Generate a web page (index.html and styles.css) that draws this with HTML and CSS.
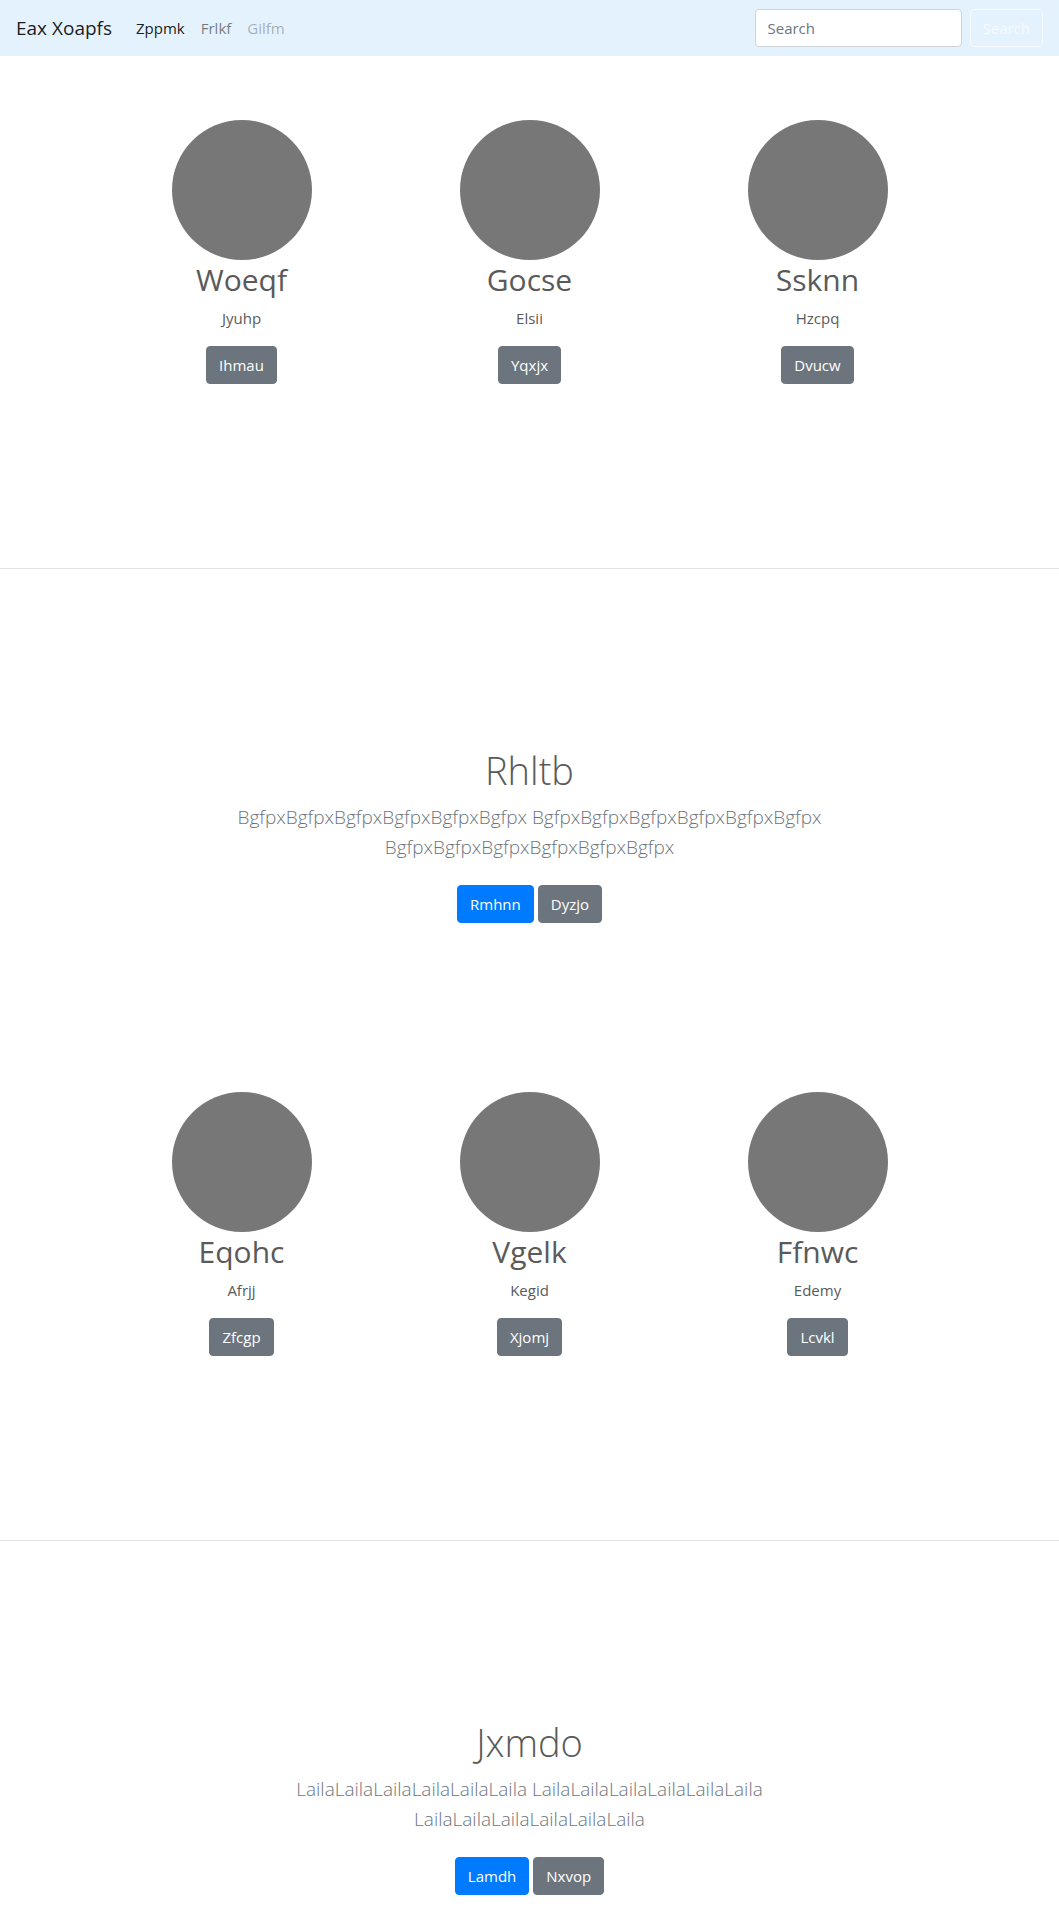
FILE: index.html
```html
<!DOCTYPE html>
<html lang="en">
<head>
<meta charset="utf-8">
<meta name="viewport" content="width=device-width, initial-scale=1">
<title>Eax Xoapfs</title>
<link rel="stylesheet" href="styles.css">
</head>
<body>
<nav class="navbar">
  <a class="brand" href="#">Eax Xoapfs</a>
  <ul class="nav-list">
    <li><a class="nav-link active" href="#">Zppmk</a></li>
    <li><a class="nav-link" href="#">Frlkf</a></li>
    <li><a class="nav-link disabled" href="#" aria-disabled="true">Gilfm</a></li>
  </ul>
  <form class="search">
    <input class="search-input" type="search" placeholder="Search" aria-label="Search">
    <button class="btn btn-outline" type="submit">Search</button>
  </form>
</nav>
<main>
  <section class="features">
    <article class="feature"><div class="avatar"></div><h2>Woeqf</h2><p>Jyuhp</p><a class="btn btn-secondary" href="#">Ihmau</a></article>
    <article class="feature"><div class="avatar"></div><h2>Gocse</h2><p>Elsii</p><a class="btn btn-secondary" href="#">Yqxjx</a></article>
    <article class="feature"><div class="avatar"></div><h2>Ssknn</h2><p>Hzcpq</p><a class="btn btn-secondary" href="#">Dvucw</a></article>
  </section>
  <hr>
  <section class="intro">
    <h1>Rhltb</h1>
    <p class="lead">BgfpxBgfpxBgfpxBgfpxBgfpxBgfpx BgfpxBgfpxBgfpxBgfpxBgfpxBgfpx BgfpxBgfpxBgfpxBgfpxBgfpxBgfpx</p>
    <div class="actions"><a class="btn btn-primary" href="#">Rmhnn</a><a class="btn btn-secondary" href="#">Dyzjo</a></div>
  </section>
  <section class="features">
    <article class="feature"><div class="avatar"></div><h2>Eqohc</h2><p>Afrjj</p><a class="btn btn-secondary" href="#">Zfcgp</a></article>
    <article class="feature"><div class="avatar"></div><h2>Vgelk</h2><p>Kegid</p><a class="btn btn-secondary" href="#">Xjomj</a></article>
    <article class="feature"><div class="avatar"></div><h2>Ffnwc</h2><p>Edemy</p><a class="btn btn-secondary" href="#">Lcvkl</a></article>
  </section>
  <hr>
  <section class="intro intro-last">
    <h1>Jxmdo</h1>
    <p class="lead">LailaLailaLailaLailaLailaLaila LailaLailaLailaLailaLailaLaila LailaLailaLailaLailaLailaLaila</p>
    <div class="actions"><a class="btn btn-primary" href="#">Lamdh</a><a class="btn btn-secondary" href="#">Nxvop</a></div>
  </section>
</main>
</body>
</html>
```
FILE: styles.css
```css
*, *::before, *::after { box-sizing: border-box; }
body {
  margin: 0;
  background: #fff;
  color: #5a5a5a;
  font-family: "Segoe UI", "Open Sans", "Noto Sans", sans-serif;
  font-size: 15px;
  line-height: 24px;
}
h1, h2, p { margin: 0; }
a { text-decoration: none; }

.navbar {
  display: flex;
  align-items: center;
  padding: 8px 16px;
  background: #e3f2fd;
}
.brand {
  margin-right: 16px;
  font-size: 19px;
  line-height: 30px;
  color: rgba(0, 0, 0, .9);
}
.nav-list { display: flex; margin: 0; padding: 0; list-style: none; }
.nav-link { display: block; padding: 8px; color: rgba(0, 0, 0, .5); }
.nav-link.active { color: rgba(0, 0, 0, .9); }
.nav-link.disabled { color: rgba(0, 0, 0, .3); }
.search { display: flex; gap: 8px; margin-left: auto; }
.search-input {
  width: 207px;
  height: 38px;
  padding: 6px 12px;
  border: 1px solid #ced4da;
  border-radius: 4px;
  background: #fff;
  font: inherit;
  appearance: none;
}
.search-input::placeholder { color: #6c757d; opacity: 1; }

.btn {
  display: inline-block;
  padding: 6px 12px;
  border: 1px solid transparent;
  border-radius: 4px;
  font: inherit;
  text-align: center;
  color: #fff;
}
.btn-outline { border-color: #f8f9fa; background: transparent; color: #f8f9fa; }
.btn-primary { border-color: #007bff; background: #007bff; }
.btn-secondary { border-color: #6c757d; background: #6c757d; }

.features {
  display: grid;
  grid-template-columns: repeat(3, 1fr);
  max-width: 864px;
  margin: 0 auto;
  padding: 64px 0 184px;
}
.feature { display: flex; flex-direction: column; align-items: center; }
.avatar {
  width: 140px;
  height: 140px;
  border-radius: 50%;
  background: #777;
}
.feature h2 { margin-bottom: 6px; font-size: 30px; font-weight: 400; line-height: 40px; }
.feature p { margin-bottom: 16px; }

hr { margin: 0; border: 0; border-top: 1px solid #e5e5e5; }

.intro {
  max-width: 640px;
  margin: 0 auto;
  padding: 177px 16px 105px;
  text-align: center;
}
.intro h1 { margin-bottom: 8px; font-size: 38px; font-weight: 300; line-height: 48px; }
.lead { margin-bottom: 23px; color: #6c757d; font-size: 19px; font-weight: 300; line-height: 30px; }
.actions { display: flex; justify-content: center; gap: 4px; }
.intro-last { padding-bottom: 24px; }
```
